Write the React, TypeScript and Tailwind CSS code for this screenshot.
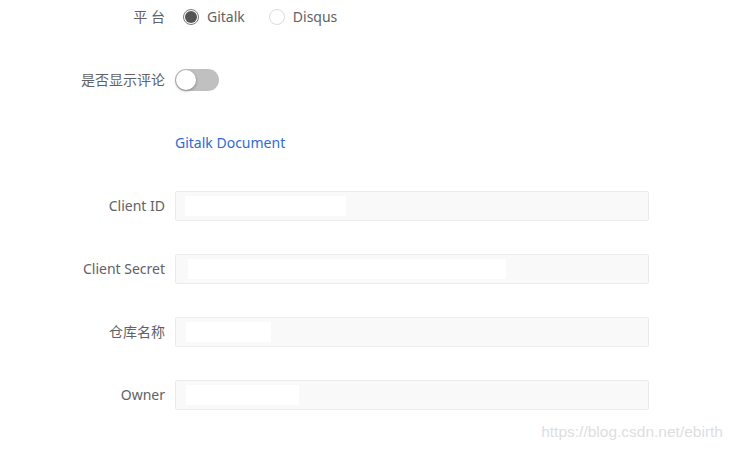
const FONT = "font-['Noto_Sans','Noto_Sans_CJK_SC',sans-serif]";

const FIELDS = [
  { label: 'Client ID', mask: 'ml-[9px] w-[161px]' },
  { label: 'Client Secret', mask: 'ml-[12px] w-[318px]' },
  { label: '仓库名称', mask: 'ml-[10px] w-[85px]' },
  { label: 'Owner', mask: 'ml-[10px] w-[113px]' },
];

function Row({ label, children }: { label?: string; children: React.ReactNode }) {
  return (
    <div className="flex h-[30px] items-center">
      <div className="-mt-[2px] w-[165px] shrink-0 text-right text-[14px] text-[#606266]">{label}</div>
      <div className="ml-[10px] flex flex-1 items-center">{children}</div>
    </div>
  );
}

function Radio({ checked, label }: { checked?: boolean; label: string }) {
  return (
    <label className="flex items-center gap-[8px] text-[14px] text-[#606266]">
      {checked ? (
        <span className="flex h-[16px] w-[16px] items-center justify-center rounded-full border border-[#7a7a7a] bg-white">
          <span className="h-[12px] w-[12px] rounded-full bg-[#555]" />
        </span>
      ) : (
        <span className="h-[16px] w-[16px] rounded-full border border-[#dcdcdc] bg-white" />
      )}
      <span className="-mt-[2px]">{label}</span>
    </label>
  );
}

export default function App() {
  return (
    <div className={`relative h-[452px] w-[733px] overflow-hidden bg-white ${FONT}`}>
      <div className="flex flex-col gap-[33px] pt-[2px]">
        <Row label="平 台">
          <div className="ml-[8px] flex items-center gap-[24px]">
            <Radio checked label="Gitalk" />
            <Radio label="Disqus" />
          </div>
        </Row>
        <Row label="是否显示评论">
          <div className="flex h-[22px] w-[44px] items-center rounded-full bg-[#c0c0c0] px-[1px]">
            <span className="h-[20px] w-[20px] rounded-full bg-white shadow-[0_1px_3px_rgba(0,0,0,0.35)]" />
          </div>
        </Row>
        <Row>
          <a className="-mt-[2px] text-[14px] text-[#2d6bd6]">Gitalk Document</a>
        </Row>
        {FIELDS.map((f) => (
          <Row key={f.label} label={f.label}>
            <div className="flex h-[30px] w-[474px] items-center rounded-[2px] border border-[#ebebeb] bg-[#f9f9f9]">
              <span className={`h-[20px] bg-white ${f.mask}`} />
            </div>
          </Row>
        ))}
      </div>
      <div className="absolute right-[10px] bottom-[9px] font-['Liberation_Sans',sans-serif] text-[15.5px] text-[#dedede]">
        https://blog.csdn.net/ebirth
      </div>
    </div>
  );
}
